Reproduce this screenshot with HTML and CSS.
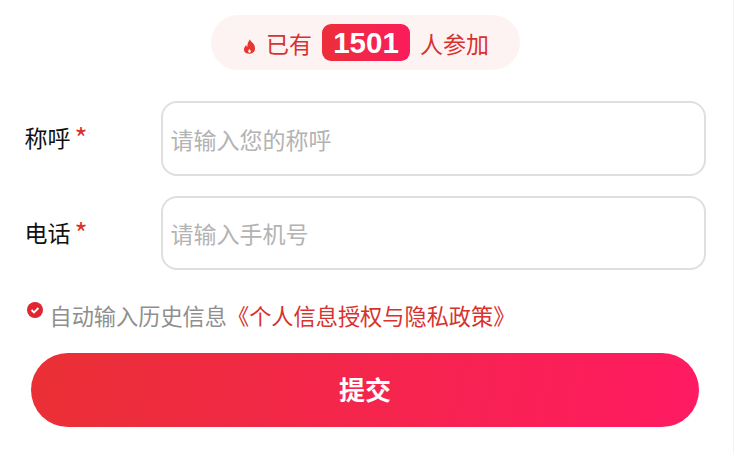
FILE: index.html
```html
<!DOCTYPE html>
<html lang="zh-CN">
<head>
  <meta charset="UTF-8" />
  <title>报名</title>
  <link rel="stylesheet" href="styles.css">
</head>
<body>
  <div class="page">
    <div class="count-wrap">
      <div class="count-pill">
        <svg class="flame" viewBox="0 0 12 14" width="13" height="15">
          <path d="M6.4 0.3C6.8 2.6 9.3 3.2 10.6 6c1.2 2.6.8 7.700-4.700 7.700C.9 13.700.2 10.200 1.300 7.900c.5-1 1.100-1.500 1.500-2.200.3.900.6 1.500 1.200 1.800C3.800 4.800 5 2.200 6.400.3z" fill="#e8352f"/>
          <path d="M6 9c.2.900 1.300 1.300 1.300 2.500 0 .9-.6 1.400-1.300 1.400s-1.300-.5-1.300-1.400C4.700 10.500 5.700 10 6 9z" fill="#fdf1f1"/>
        </svg>
        <span class="count-text">已有</span>
        <span class="count-num">1501</span>
        <span class="count-text">人参加</span>
      </div>
    </div>

    <form class="form">
      <div class="form-group">
        <label for="name">称呼<span class="req">*</span></label>
        <input type="text" id="name" placeholder="请输入您的称呼" />
      </div>
      <div class="form-group">
        <label for="phone">电话<span class="req">*</span></label>
        <input type="text" id="phone" placeholder="请输入手机号" />
      </div>

      <div class="agree">
        <svg class="check" viewBox="0 0 16 16" width="16" height="16">
          <circle cx="8" cy="8" r="8" fill="#e0262e"/>
          <path d="M4.500 8l2.500 2.400 4.400-4.400" fill="none" stroke="#fff" stroke-width="1.800"/>
        </svg>
        <span class="agree-text">自动输入历史信息</span><a class="agree-link" href="#">《个人信息授权与隐私政策》</a>
      </div>

      <button type="button" class="submit-button">提交</button>
    </form>
  </div>
</body>
</html>
```

FILE: styles.css
```css
html, body {
  margin: 0;
  padding: 0;
  background: #fff;
}

body {
  font-family: "Noto Sans CJK SC", "Liberation Sans", sans-serif;
  height: 454px;
  overflow: hidden;
}

.page {
  width: 734px;
  height: 454px;
  box-sizing: border-box;
  border-right: 1px solid #f4f4f4;
  padding-top: 15px;
}

.count-wrap {
  padding-left: 211px;
}

.count-pill {
  display: flex;
  align-items: center;
  width: 309px;
  height: 55px;
  box-sizing: border-box;
  padding-left: 32px;
  background: #fef3f3;
  border-radius: 28px;
}

.flame {
  margin: 8px 10px 0 0;
}

.count-text {
  font-size: 23px;
  color: #d8322e;
}

.count-num {
  margin: -1px 10px 0 10px;
  width: 88px;
  height: 37px;
  line-height: 37px;
  text-align: center;
  font-family: "Liberation Sans", sans-serif;
  font-size: 29.500px;
  font-weight: bold;
  color: #fff;
  background: linear-gradient(90deg, #ec2f3a, #fb1c5c);
  border-radius: 9px;
}

.form {
  margin-top: 31px;
}

.form-group {
  display: flex;
  align-items: center;
  padding-left: 24.500px;
  margin-bottom: 20px;
}

.form-group label {
  width: 136.500px;
  margin-top: -3px;
  font-size: 23px;
  line-height: 34px;
  color: #111;
}

.form-group + .form-group label {
  margin-top: -2px;
}

.req {
  margin-left: 4px;
  font-size: 28px;
  line-height: 20px;
  vertical-align: -2px;
  color: #d8322e;
}

.form-group input {
  width: 545px;
  height: 75px;
  box-sizing: border-box;
  padding: 0 7.500px;
  font-family: inherit;
  font-size: 23px;
  border: 2px solid #dfdfdf;
  border-radius: 16px;
  outline: none;
}

.form-group + .form-group input {
  height: 74px;
}

.form-group input::placeholder {
  color: #b3b3b3;
}

.agree {
  display: flex;
  align-items: center;
  padding-left: 27px;
  margin-top: 28px;
  height: 34px;
  font-size: 22.200px;
}

.check {
  margin: -10px 6.500px 0 0;
}

.agree-text {
  color: #8f8f8f;
}

.agree-link {
  color: #d8322e;
  text-decoration: none;
}

.submit-button {
  display: block;
  width: 668px;
  height: 74px;
  margin: 21px 0 0 31px;
  padding: 0 0 3px;
  font-family: inherit;
  font-size: 26px;
  font-weight: bold;
  color: #fff;
  background: linear-gradient(100deg, #ea3035, #ff1a62);
  border: none;
  border-radius: 37px;
}
```
